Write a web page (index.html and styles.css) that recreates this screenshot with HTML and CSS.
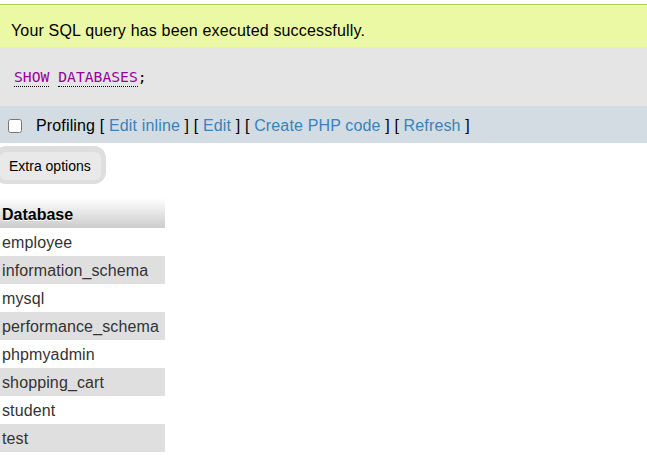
FILE: index.html
```html
<!DOCTYPE html>
<html>
<head>
<meta charset="utf-8">
<link rel="stylesheet" href="styles.css">
</head>
<body>
<div class="success">Your SQL query has been executed successfully.</div>
<div class="sql"><code><span class="kw">SHOW</span> <span class="kw">DATABASES</span>;</code></div>
<div class="tools">
  <input type="checkbox" class="check">
  <span class="links">Profiling [ <a href="#">Edit inline</a> ] [ <a href="#">Edit</a> ] [ <a href="#">Create PHP code</a> ] [ <a href="#">Refresh</a> ]</span>
</div>
<div class="extra"><span class="extra-btn">Extra options</span></div>
<table class="results">
  <thead><tr><th>Database</th></tr></thead>
  <tbody>
    <tr><td>employee</td></tr>
    <tr class="alt"><td>information_schema</td></tr>
    <tr><td>mysql</td></tr>
    <tr class="alt"><td>performance_schema</td></tr>
    <tr><td>phpmyadmin</td></tr>
    <tr class="alt"><td>shopping_cart</td></tr>
    <tr><td>student</td></tr>
    <tr class="alt"><td>test</td></tr>
  </tbody>
</table>
</body>
</html>
```
FILE: styles.css
```css
html, body {
  margin: 0;
  padding: 0;
  background: #fff;
  font-family: "Liberation Sans", Arial, sans-serif;
  font-size: 16px;
  color: #000;
  overflow: hidden;
}
.success {
  margin-top: 4px;
  border-top: 1px solid #a3d44e;
  box-shadow: inset 0 1px 0 #f7fdd6;
  background: #ebf8a4;
  padding: 17px 11px 7px;
  line-height: 18px;
  letter-spacing: 0.17px;
}
.sql {
  background: #e5e5e5;
  height: 59px;
  box-sizing: border-box;
  padding: 21px 14px 0;
}
.sql code {
  font-family: "DejaVu Sans Mono", monospace;
  font-size: 14.7px;
  line-height: 18px;
  color: #000;
}
.kw {
  color: #909;
  border-bottom: 1px dotted #000;
  padding-bottom: 1px;
}
.tools {
  background: #d3dce3;
  height: 37px;
  box-sizing: border-box;
  display: flex;
  align-items: center;
  line-height: 18px;
  padding-top: 2px;
}
.check {
  width: 14px;
  height: 14px;
  margin: 0 14px 0 8px;
}
.links {
  letter-spacing: 0.15px;
  white-space: nowrap;
}
.links a {
  color: #3a82b8;
  text-decoration: none;
}
.extra {
  display: inline-block;
  margin: 3px 0 0 -6px;
  padding: 6px 5px 4px 6px;
  background: #dedede;
  border-radius: 12px;
}
.extra-btn {
  display: block;
  background: #e9e9e9;
  border-radius: 6px;
  font-size: 14px;
  line-height: 16px;
  padding: 6px 10px 6px 9px;
}
.results {
  border-collapse: collapse;
  margin-top: 14px;
  width: 165px;
}
.results th {
  text-align: left;
  font-weight: bold;
  height: 30px;
  padding: 4px 2px 0;
  box-sizing: border-box;
  background: linear-gradient(#ffffff, #cccccc);
  text-shadow: 0 1px 0 #fff;
}
.results td {
  height: 28px;
  padding: 2px 2px 0;
  box-sizing: border-box;
  color: #333;
  line-height: 26px;
  white-space: nowrap;
  letter-spacing: 0.12px;
}
.results tr.alt td {
  background: #dfdfdf;
}
```
